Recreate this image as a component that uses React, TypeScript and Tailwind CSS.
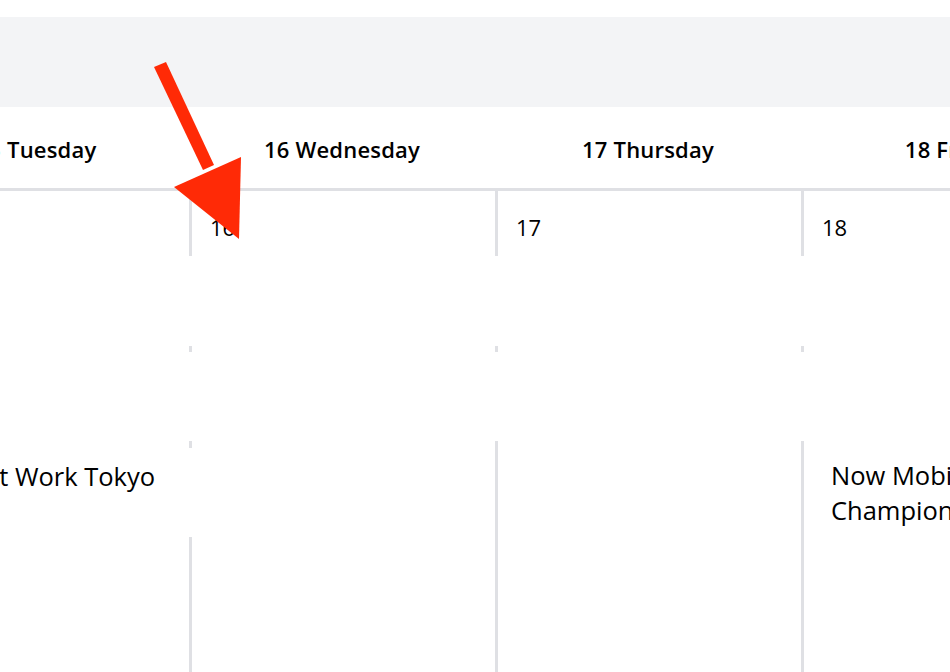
import React from "react";

const font = { fontFamily: '"Open Sans", "Noto Sans", sans-serif' };

function Line({ h }: { h: string }) {
  return <div className={`${h} border-l-[3px] border-[#dfe0e4]`} />;
}

export default function App() {
  const days = ["15 Tuesday", "16 Wednesday", "17 Thursday", "18 Friday"];
  return (
    <div className="relative w-[950px] h-[672px] overflow-hidden bg-white text-black" style={font}>
      <div className="h-[17px]" />
      <div className="h-[90px] bg-[#f3f4f6]" />
      <div className="flex h-[81px] ml-[-117px]">
        {days.map((d) => (
          <div key={d} className="w-[306px] shrink-0 flex items-center justify-center pt-[4px] text-[22px] font-semibold tracking-[0.2px]">
            {d}
          </div>
        ))}
      </div>
      <div className="h-[3px] bg-[#dfe0e4]" />
      <div className="flex ml-[-117px]">
        {/* col 0 */}
        <div className="w-[306px] shrink-0 flex flex-col">
          <div className="h-[65px]" />
          <div className="h-[185px]" />
          <div className="pl-[54px] pt-[18px] text-[25.5px] leading-[35px] whitespace-nowrap">Smart Work Tokyo</div>
        </div>
        {/* col 1 */}
        <div className="w-[306px] shrink-0 flex flex-col">
          <div className="h-[65px] border-l-[3px] border-[#dfe0e4] pl-[18px] pt-[22px] text-[22px] leading-[28px] font-medium">16</div>
          <div className="h-[90px]" />
          <Line h="h-[6px]" />
          <div className="h-[89px]" />
          <Line h="h-[7px]" />
          <div className="h-[89px]" />
          <Line h="h-[200px]" />
        </div>
        {/* col 2 */}
        <div className="w-[306px] shrink-0 flex flex-col">
          <div className="h-[65px] border-l-[3px] border-[#dfe0e4] pl-[18px] pt-[22px] text-[22px] leading-[28px] font-medium">17</div>
          <div className="h-[90px]" />
          <Line h="h-[6px]" />
          <div className="h-[89px]" />
          <Line h="h-[300px]" />
        </div>
        {/* col 3 */}
        <div className="w-[306px] shrink-0 flex flex-col">
          <div className="h-[65px] border-l-[3px] border-[#dfe0e4] pl-[18px] pt-[22px] text-[22px] leading-[28px] font-medium">18</div>
          <div className="h-[90px]" />
          <Line h="h-[6px]" />
          <div className="h-[89px]" />
          <div className="h-[300px] border-l-[3px] border-[#dfe0e4] pl-[27px] pt-[17px] text-[25.5px] leading-[35px] whitespace-nowrap">
            Now Mobile
            <br />
            Championship
          </div>
        </div>
      </div>
      <svg className="absolute left-0 top-0 pointer-events-none" width="950" height="672" viewBox="0 0 950 672">
        <polygon points="154,67 166,62 214,165 203,170" fill="#ff2a06" />
        <polygon points="174,187 241,157 239,239" fill="#ff2a06" />
      </svg>
    </div>
  );
}
